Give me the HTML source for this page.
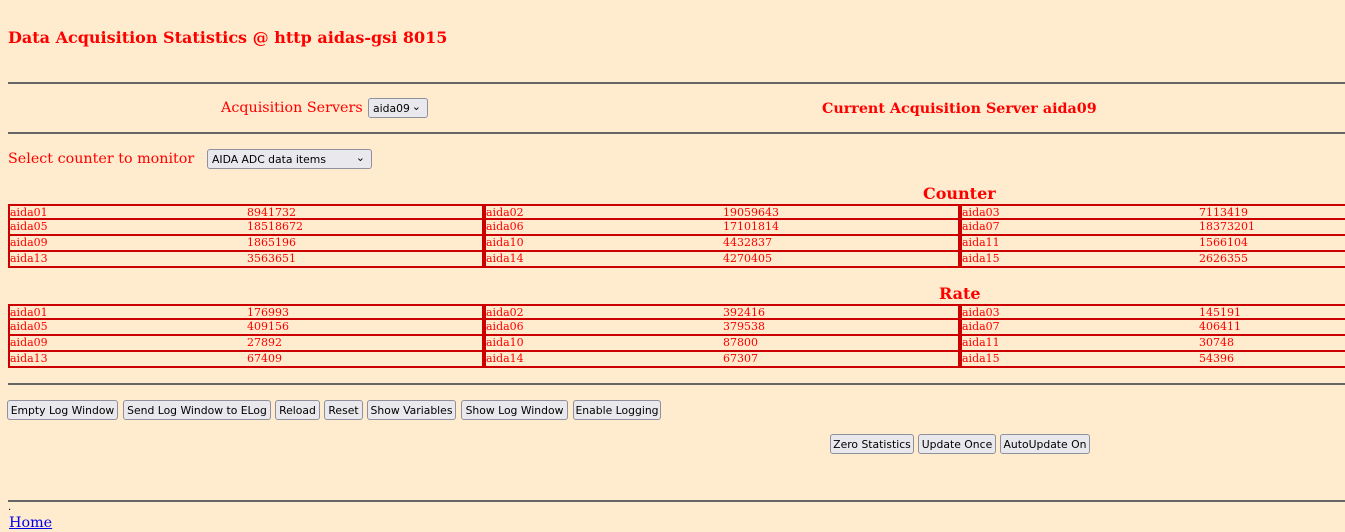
<!DOCTYPE html>
<html><head><style>
html,body{margin:0;overflow:hidden}
body{background:#ffebcd;width:1345px;height:532px;position:relative;font-family:"DejaVu Serif",serif;color:#f00}
#w{position:absolute;left:0;top:0;width:1345px;height:532px;overflow:hidden}
.a{position:absolute;white-space:nowrap}
hr{position:absolute;left:8px;width:1337px;margin:0;border:0;border-top:2px solid #666;height:0}
h1{position:absolute;left:8px;top:28px;margin:0;font-size:16px;font-weight:bold;white-space:nowrap}
.btn{position:absolute;height:20px;box-sizing:border-box;border:1px solid #8f8f9d;border-radius:3px;background:#e9e9ed;font:10.8px "DejaVu Sans",sans-serif;color:#000;line-height:19px;text-align:center;white-space:nowrap;overflow:hidden}
.sel{position:absolute;height:20px;box-sizing:border-box;border:1px solid #8f8f9d;border-radius:3px;background:#e9e9ed;font:10.8px "DejaVu Sans",sans-serif;color:#000;line-height:19px;padding:0 4px}
.sel span{position:absolute;right:6px;top:-2px;font-size:11px}
.tbl{position:absolute;left:8px;width:1904px}
.cell{position:absolute;height:16px;width:476px;box-sizing:border-box;border:2px solid #c00;font-size:11px;line-height:13px;white-space:nowrap}
.cell b{font-weight:normal;position:absolute;left:0;top:0}
.cell i{font-style:normal;position:absolute;left:237px;top:0}
.ttl{position:absolute;font-weight:bold;font-size:16px}
</style></head><body><div id="w">
<h1>Data Acquisition Statistics @ http aidas-gsi 8015</h1>
<hr style="top:82px">
<div class="a" style="left:221px;top:100px;font-size:14.3px">Acquisition Servers</div>
<div class="sel" style="left:368px;top:98px;width:60px">aida09<span>⌄</span></div>
<div class="a" style="left:822px;top:101px;font-size:14.3px;font-weight:bold">Current Acquisition Server aida09</div>
<hr style="top:132px">
<div class="a" style="left:8px;top:151px;font-size:14.3px">Select counter to monitor</div>
<div class="sel" style="left:207px;top:149px;width:165px">AIDA ADC data items<span>⌄</span></div>
<div class="ttl" style="left:923px;top:184px">Counter</div>
<div class="ttl" style="left:939px;top:284px">Rate</div>
<div id="t1"></div>
<hr style="top:383px">
<div class="btn" style="left:7px;top:400px;width:111px">Empty Log Window</div>
<div class="btn" style="left:123px;top:400px;width:148px">Send Log Window to ELog</div>
<div class="btn" style="left:275px;top:400px;width:45px">Reload</div>
<div class="btn" style="left:324px;top:400px;width:39px">Reset</div>
<div class="btn" style="left:367px;top:400px;width:89px">Show Variables</div>
<div class="btn" style="left:461px;top:400px;width:107px">Show Log Window</div>
<div class="btn" style="left:573px;top:400px;width:88px">Enable Logging</div>
<div class="btn" style="left:830px;top:434px;width:84px">Zero Statistics</div>
<div class="btn" style="left:918px;top:434px;width:78px">Update Once</div>
<div class="btn" style="left:1000px;top:434px;width:90px">AutoUpdate On</div>
<hr style="top:500px">
<div class="a" style="left:8px;top:502px;font-size:10px;color:#000">.</div>
<a class="a" style="left:9px;top:515px;font-size:14.3px;color:#00e;text-decoration:underline">Home</a>
</div>
<script>
function tbl(top,data){
 let h='<div class="tbl" style="top:'+top+'px">';
 for(let r=0;r<4;r++){
  for(let c=0;c<4;c++){
   const n=r*4+c+1, nm='aida'+String(n).padStart(2,'0');
   const v=data[r][c]||'';
   const t=r===0?0:r*16-1, hh=r===0?16:17;
   h+='<div class="cell" style="left:'+(c*476)+'px;top:'+t+'px;height:'+hh+'px;'+(r>0?'border-top-width:1px;':'')+'"><b>'+nm+'</b><i>'+v+'</i></div>';
  }
 }
 return h+'</div>';
}
document.getElementById('t1').outerHTML=
 tbl(204,[['8941732','19059643','7113419',''],['18518672','17101814','18373201',''],['1865196','4432837','1566104',''],['3563651','4270405','2626355','']])+
 tbl(304,[['176993','392416','145191',''],['409156','379538','406411',''],['27892','87800','30748',''],['67409','67307','54396','']]);
</script>
</body></html>
